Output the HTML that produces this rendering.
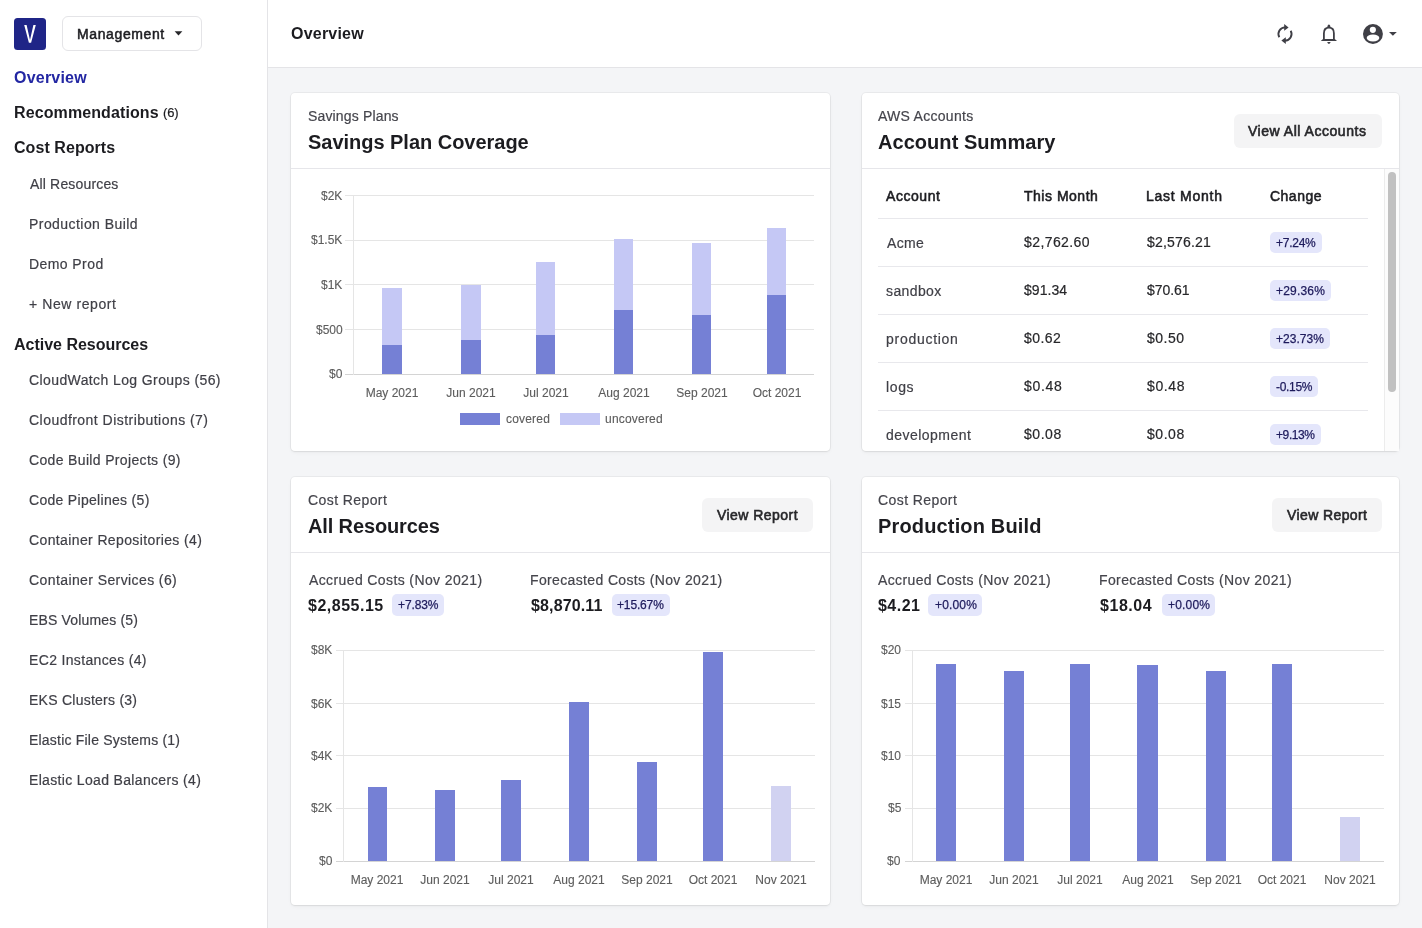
<!DOCTYPE html>
<html><head><meta charset="utf-8"><title>Overview</title>
<style>
html,body{margin:0;padding:0;width:1422px;height:928px;overflow:hidden;background:#f4f5f7;}
body{position:relative;font-family:"Liberation Sans",sans-serif;}
.t{position:absolute;line-height:1;white-space:nowrap;will-change:transform;}
.r{position:absolute;}
</style></head><body>
<div class="r" style="left:0.00px;top:0.00px;width:1422.00px;height:928.00px;background:#f4f5f7;"></div>
<div class="r" style="left:0.00px;top:0.00px;width:267.00px;height:928.00px;background:#ffffff;"></div>
<div class="r" style="left:267.00px;top:0.00px;width:1.00px;height:928.00px;background:#e4e4e7;"></div>
<div class="r" style="left:268.00px;top:0.00px;width:1154.00px;height:67.00px;background:#ffffff;"></div>
<div class="r" style="left:268.00px;top:67.00px;width:1154.00px;height:1.00px;background:#e4e4e7;"></div>
<div class="r" style="left:14.20px;top:18.10px;width:31.60px;height:31.60px;background:#1f2587;border-radius:3.5px;"></div>
<svg class="r" style="left:14px;top:18px" width="32" height="32" viewBox="0 0 32 32"><polygon points="10.2,7.1 12.6,7.1 16.0,21.9 19.4,7.1 21.8,7.1 17.1,24.8 14.9,24.8" fill="#fff"/></svg>
<div class="r" style="left:62.20px;top:16.20px;width:139.50px;height:35.00px;background:#ffffff;box-sizing:border-box;border:1px solid #e4e4e7;border-radius:6px;"></div>
<div class="t" style="left:76.96px;top:27.00px;font-size:14px;color:#1c1c20;-webkit-text-stroke:0.5px #1c1c20;letter-spacing:0.614px;">Management</div>
<svg class="r" style="left:173.5px;top:31px" width="9" height="5" viewBox="0 0 9 5"><polygon points="0.6,0.3 8.4,0.3 4.5,4.5" fill="#27272a"/></svg>
<div class="t" style="left:14.30px;top:70.00px;font-size:16px;color:#2327a3;font-weight:700;letter-spacing:0.213px;">Overview</div>
<div class="t" style="left:13.80px;top:105.00px;font-size:16px;color:#1c1c20;font-weight:700;letter-spacing:0.108px;">Recommendations</div>
<div class="t" style="left:163.29px;top:106.00px;font-size:13px;color:#1c1c20;-webkit-text-stroke:0.2px #1c1c20;letter-spacing:-0.103px;">(6)</div>
<div class="t" style="left:14.30px;top:140.00px;font-size:16px;color:#1c1c20;font-weight:700;letter-spacing:0.063px;">Cost Reports</div>
<div class="t" style="left:29.70px;top:177.00px;font-size:14px;color:#3f3f46;-webkit-text-stroke:0.2px #3f3f46;letter-spacing:0.164px;">All Resources</div>
<div class="t" style="left:28.61px;top:217.00px;font-size:14px;color:#3f3f46;-webkit-text-stroke:0.2px #3f3f46;letter-spacing:0.442px;">Production Build</div>
<div class="t" style="left:28.61px;top:257.00px;font-size:14px;color:#3f3f46;-webkit-text-stroke:0.2px #3f3f46;letter-spacing:0.422px;">Demo Prod</div>
<div class="t" style="left:29.04px;top:297.00px;font-size:14px;color:#3f3f46;-webkit-text-stroke:0.2px #3f3f46;letter-spacing:0.579px;">+ New report</div>
<div class="t" style="left:14.15px;top:337.00px;font-size:16px;color:#1c1c20;font-weight:700;letter-spacing:-0.013px;">Active Resources</div>
<div class="t" style="left:29.04px;top:373.00px;font-size:14px;color:#3f3f46;-webkit-text-stroke:0.2px #3f3f46;letter-spacing:0.396px;">CloudWatch Log Groups (56)</div>
<div class="t" style="left:29.04px;top:413.00px;font-size:14px;color:#3f3f46;-webkit-text-stroke:0.2px #3f3f46;letter-spacing:0.462px;">Cloudfront Distributions (7)</div>
<div class="t" style="left:29.04px;top:453.00px;font-size:14px;color:#3f3f46;-webkit-text-stroke:0.2px #3f3f46;letter-spacing:0.342px;">Code Build Projects (9)</div>
<div class="t" style="left:29.04px;top:493.00px;font-size:14px;color:#3f3f46;-webkit-text-stroke:0.2px #3f3f46;letter-spacing:0.301px;">Code Pipelines (5)</div>
<div class="t" style="left:29.04px;top:533.00px;font-size:14px;color:#3f3f46;-webkit-text-stroke:0.2px #3f3f46;letter-spacing:0.379px;">Container Repositories (4)</div>
<div class="t" style="left:29.04px;top:573.00px;font-size:14px;color:#3f3f46;-webkit-text-stroke:0.2px #3f3f46;letter-spacing:0.405px;">Container Services (6)</div>
<div class="t" style="left:28.61px;top:613.00px;font-size:14px;color:#3f3f46;-webkit-text-stroke:0.2px #3f3f46;letter-spacing:0.158px;">EBS Volumes (5)</div>
<div class="t" style="left:28.61px;top:653.00px;font-size:14px;color:#3f3f46;-webkit-text-stroke:0.2px #3f3f46;letter-spacing:0.342px;">EC2 Instances (4)</div>
<div class="t" style="left:28.61px;top:693.00px;font-size:14px;color:#3f3f46;-webkit-text-stroke:0.2px #3f3f46;letter-spacing:0.251px;">EKS Clusters (3)</div>
<div class="t" style="left:28.61px;top:733.00px;font-size:14px;color:#3f3f46;-webkit-text-stroke:0.2px #3f3f46;letter-spacing:0.207px;">Elastic File Systems (1)</div>
<div class="t" style="left:28.61px;top:773.00px;font-size:14px;color:#3f3f46;-webkit-text-stroke:0.2px #3f3f46;letter-spacing:0.336px;">Elastic Load Balancers (4)</div>
<div class="t" style="left:291.30px;top:26.00px;font-size:16px;color:#1c1c20;font-weight:700;letter-spacing:0.213px;">Overview</div>
<svg class="r" style="left:1273px;top:22px" width="24" height="24" viewBox="0 0 24 24">
<path d="M6.3 15.2 A6.6 6.6 0 0 1 12.2 5.4" fill="none" stroke="#3f3f46" stroke-width="1.9"/>
<path d="M17.7 8.8 A6.6 6.6 0 0 1 11.8 18.6" fill="none" stroke="#3f3f46" stroke-width="1.9"/>
<polygon points="11.2,2 15.6,5.4 11.2,8.8" fill="#3f3f46"/>
<polygon points="12.8,15.2 8.4,18.6 12.8,22" fill="#3f3f46"/>
</svg>
<svg class="r" style="left:1314px;top:20px" width="30" height="28" viewBox="0 0 30 28">
<path d="M9.9 19 V13.2 C9.9 9.6 12 7.7 14.9 7.7 C17.8 7.7 19.9 9.6 19.9 13.2 V19" fill="none" stroke="#3f3f46" stroke-width="1.8"/>
<polygon points="9,18.9 20.8,18.9 23,20.9 6.8,20.9" fill="#3f3f46"/>
<path d="M13.1 7.9 Q13.6 4.5 14.9 4.5 Q16.2 4.5 16.7 7.9 Z" fill="#3f3f46"/>
<path d="M13.2 22.1 H16.6 Q16.2 23.9 14.9 23.9 Q13.6 23.9 13.2 22.1 Z" fill="#3f3f46"/>
</svg>
<svg class="r" style="left:1358px;top:18px" width="44" height="30" viewBox="0 0 44 30">
<circle cx="14.95" cy="15.95" r="9.95" fill="#3f3f46"/>
<circle cx="14.85" cy="11.85" r="3.1" fill="#fff"/>
<ellipse cx="15" cy="20" rx="6.3" ry="3.4" fill="#fff"/>
<polygon points="31,13.9 38.8,13.9 34.9,17.8" fill="#3f3f46"/>
</svg>
<div class="r" style="left:291.40px;top:92.60px;width:538.70px;height:358.70px;background:#ffffff;border-radius:4px;box-shadow:0 0 0 1px rgba(0,0,0,0.045),0 1px 2px rgba(0,0,0,0.05),0 2px 4px rgba(0,0,0,0.03);"></div>
<div class="r" style="left:291.40px;top:168.00px;width:538.70px;height:1.00px;background:#e6e6ea;"></div>
<div class="r" style="left:861.60px;top:92.60px;width:537.60px;height:358.70px;background:#ffffff;border-radius:4px;box-shadow:0 0 0 1px rgba(0,0,0,0.045),0 1px 2px rgba(0,0,0,0.05),0 2px 4px rgba(0,0,0,0.03);"></div>
<div class="r" style="left:861.60px;top:168.00px;width:537.60px;height:1.00px;background:#e6e6ea;"></div>
<div class="r" style="left:291.40px;top:476.80px;width:538.70px;height:428.70px;background:#ffffff;border-radius:4px;box-shadow:0 0 0 1px rgba(0,0,0,0.045),0 1px 2px rgba(0,0,0,0.05),0 2px 4px rgba(0,0,0,0.03);"></div>
<div class="r" style="left:291.40px;top:552.20px;width:538.70px;height:1.00px;background:#e6e6ea;"></div>
<div class="r" style="left:861.60px;top:476.80px;width:537.60px;height:428.70px;background:#ffffff;border-radius:4px;box-shadow:0 0 0 1px rgba(0,0,0,0.045),0 1px 2px rgba(0,0,0,0.05),0 2px 4px rgba(0,0,0,0.03);"></div>
<div class="r" style="left:861.60px;top:552.20px;width:537.60px;height:1.00px;background:#e6e6ea;"></div>
<div class="t" style="left:308.46px;top:109.00px;font-size:14px;color:#45454c;-webkit-text-stroke:0.2px #45454c;letter-spacing:0.155px;">Savings Plans</div>
<div class="t" style="left:308.49px;top:132.00px;font-size:20px;color:#1c1c20;font-weight:700;letter-spacing:-0.025px;">Savings Plan Coverage</div>
<div class="r" style="left:345.00px;top:194.90px;width:468.50px;height:1.00px;background:#e5e5e5;"></div>
<div class="t" style="right:1079.80px;top:190.00px;font-size:12px;color:#5c5c5c;-webkit-text-stroke:0.12px #5c5c5c;">$2K</div>
<div class="r" style="left:345.00px;top:239.60px;width:468.50px;height:1.00px;background:#e5e5e5;"></div>
<div class="t" style="right:1079.80px;top:234.00px;font-size:12px;color:#5c5c5c;-webkit-text-stroke:0.12px #5c5c5c;">$1.5K</div>
<div class="r" style="left:345.00px;top:284.10px;width:468.50px;height:1.00px;background:#e5e5e5;"></div>
<div class="t" style="right:1079.80px;top:279.00px;font-size:12px;color:#5c5c5c;-webkit-text-stroke:0.12px #5c5c5c;">$1K</div>
<div class="r" style="left:345.00px;top:328.70px;width:468.50px;height:1.00px;background:#e5e5e5;"></div>
<div class="t" style="right:1079.48px;top:324.00px;font-size:12px;color:#5c5c5c;-webkit-text-stroke:0.12px #5c5c5c;">$500</div>
<div class="r" style="left:345.00px;top:373.50px;width:468.50px;height:1.00px;background:#d4d4d4;"></div>
<div class="t" style="right:1079.48px;top:368.00px;font-size:12px;color:#5c5c5c;-webkit-text-stroke:0.12px #5c5c5c;">$0</div>
<div class="r" style="left:352.50px;top:195.00px;width:1.00px;height:179.50px;background:#e5e5e5;"></div>
<div class="r" style="left:382.20px;top:288.40px;width:20.20px;height:56.60px;background:#c5c8f5;"></div>
<div class="r" style="left:382.20px;top:345.00px;width:20.20px;height:29.00px;background:#7580d5;"></div>
<div class="t" style="left:192.30px;width:400px;text-align:center;top:387.00px;font-size:12px;color:#5c5c5c;-webkit-text-stroke:0.12px #5c5c5c;">May 2021</div>
<div class="r" style="left:461.00px;top:284.60px;width:19.50px;height:55.40px;background:#c5c8f5;"></div>
<div class="r" style="left:461.00px;top:340.00px;width:19.50px;height:34.00px;background:#7580d5;"></div>
<div class="t" style="left:270.75px;width:400px;text-align:center;top:387.00px;font-size:12px;color:#5c5c5c;-webkit-text-stroke:0.12px #5c5c5c;">Jun 2021</div>
<div class="r" style="left:535.80px;top:261.70px;width:19.70px;height:73.00px;background:#c5c8f5;"></div>
<div class="r" style="left:535.80px;top:334.70px;width:19.70px;height:39.30px;background:#7580d5;"></div>
<div class="t" style="left:345.65px;width:400px;text-align:center;top:387.00px;font-size:12px;color:#5c5c5c;-webkit-text-stroke:0.12px #5c5c5c;">Jul 2021</div>
<div class="r" style="left:613.90px;top:239.30px;width:19.40px;height:70.90px;background:#c5c8f5;"></div>
<div class="r" style="left:613.90px;top:310.20px;width:19.40px;height:63.80px;background:#7580d5;"></div>
<div class="t" style="left:423.60px;width:400px;text-align:center;top:387.00px;font-size:12px;color:#5c5c5c;-webkit-text-stroke:0.12px #5c5c5c;">Aug 2021</div>
<div class="r" style="left:691.80px;top:243.30px;width:19.60px;height:71.40px;background:#c5c8f5;"></div>
<div class="r" style="left:691.80px;top:314.70px;width:19.60px;height:59.30px;background:#7580d5;"></div>
<div class="t" style="left:501.60px;width:400px;text-align:center;top:387.00px;font-size:12px;color:#5c5c5c;-webkit-text-stroke:0.12px #5c5c5c;">Sep 2021</div>
<div class="r" style="left:767.00px;top:228.00px;width:19.40px;height:67.00px;background:#c5c8f5;"></div>
<div class="r" style="left:767.00px;top:295.00px;width:19.40px;height:79.00px;background:#7580d5;"></div>
<div class="t" style="left:576.70px;width:400px;text-align:center;top:387.00px;font-size:12px;color:#5c5c5c;-webkit-text-stroke:0.12px #5c5c5c;">Oct 2021</div>
<div class="r" style="left:460.00px;top:413.20px;width:40.30px;height:11.60px;background:#7580d5;"></div>
<div class="t" style="left:505.76px;top:413.00px;font-size:12px;color:#5c5c5c;-webkit-text-stroke:0.12px #5c5c5c;letter-spacing:0.185px;">covered</div>
<div class="r" style="left:559.80px;top:413.20px;width:40.20px;height:11.60px;background:#c5c8f5;"></div>
<div class="t" style="left:605.01px;top:413.00px;font-size:12px;color:#5c5c5c;-webkit-text-stroke:0.12px #5c5c5c;letter-spacing:0.202px;">uncovered</div>
<div class="t" style="left:878.20px;top:109.00px;font-size:14px;color:#45454c;-webkit-text-stroke:0.2px #45454c;letter-spacing:0.281px;">AWS Accounts</div>
<div class="t" style="left:877.79px;top:132.00px;font-size:20px;color:#1c1c20;font-weight:700;letter-spacing:0.048px;">Account Summary</div>
<div class="r" style="left:1233.70px;top:114.20px;width:148.50px;height:33.70px;background:#f4f4f5;border-radius:6px;"></div>
<div class="t" style="left:1248.30px;top:124.00px;font-size:14px;color:#27272a;-webkit-text-stroke:0.6px #27272a;letter-spacing:0.526px;">View All Accounts</div>
<div class="t" style="left:886.48px;top:189.00px;font-size:14px;color:#1c1c20;-webkit-text-stroke:0.55px #1c1c20;letter-spacing:0.553px;">Account</div>
<div class="t" style="left:1024.46px;top:189.00px;font-size:14px;color:#1c1c20;-webkit-text-stroke:0.55px #1c1c20;letter-spacing:0.512px;">This Month</div>
<div class="t" style="left:1145.98px;top:189.00px;font-size:14px;color:#1c1c20;-webkit-text-stroke:0.55px #1c1c20;letter-spacing:0.741px;">Last Month</div>
<div class="t" style="left:1269.82px;top:189.00px;font-size:14px;color:#1c1c20;-webkit-text-stroke:0.55px #1c1c20;letter-spacing:0.487px;">Change</div>
<div class="r" style="left:878.00px;top:218.00px;width:490.00px;height:1.00px;background:#e8e8ec;"></div>
<div class="t" style="left:886.60px;top:236.00px;font-size:14px;color:#3f3f46;-webkit-text-stroke:0.2px #3f3f46;letter-spacing:0.360px;">Acme</div>
<div class="t" style="left:1024.20px;top:235.00px;font-size:14px;color:#27272a;-webkit-text-stroke:0.2px #27272a;letter-spacing:0.408px;">$2,762.60</div>
<div class="t" style="left:1147.20px;top:235.00px;font-size:14px;color:#27272a;-webkit-text-stroke:0.2px #27272a;letter-spacing:0.198px;">$2,576.21</div>
<div class="r" style="left:1270.40px;top:232.10px;width:51.80px;height:21.20px;background:#e4e6fb;border-radius:5px;"></div>
<div class="t" style="left:1276.28px;top:237.00px;font-size:12px;color:#1e1b5c;-webkit-text-stroke:0.25px #1e1b5c;letter-spacing:-0.263px;">+7.24%</div>
<div class="r" style="left:878.00px;top:266.00px;width:490.00px;height:1.00px;background:#e8e8ec;"></div>
<div class="t" style="left:886.38px;top:284.00px;font-size:14px;color:#3f3f46;-webkit-text-stroke:0.2px #3f3f46;letter-spacing:0.381px;">sandbox</div>
<div class="t" style="left:1024.20px;top:283.00px;font-size:14px;color:#27272a;-webkit-text-stroke:0.2px #27272a;letter-spacing:0.066px;">$91.34</div>
<div class="t" style="left:1147.20px;top:283.00px;font-size:14px;color:#27272a;-webkit-text-stroke:0.2px #27272a;letter-spacing:-0.071px;">$70.61</div>
<div class="r" style="left:1270.40px;top:280.10px;width:61.10px;height:21.20px;background:#e4e6fb;border-radius:5px;"></div>
<div class="t" style="left:1276.28px;top:285.00px;font-size:12px;color:#1e1b5c;-webkit-text-stroke:0.25px #1e1b5c;letter-spacing:0.185px;">+29.36%</div>
<div class="r" style="left:878.00px;top:314.00px;width:490.00px;height:1.00px;background:#e8e8ec;"></div>
<div class="t" style="left:885.73px;top:332.00px;font-size:14px;color:#3f3f46;-webkit-text-stroke:0.2px #3f3f46;letter-spacing:0.720px;">production</div>
<div class="t" style="left:1024.20px;top:331.00px;font-size:14px;color:#27272a;-webkit-text-stroke:0.2px #27272a;letter-spacing:0.433px;">$0.62</div>
<div class="t" style="left:1147.20px;top:331.00px;font-size:14px;color:#27272a;-webkit-text-stroke:0.2px #27272a;letter-spacing:0.479px;">$0.50</div>
<div class="r" style="left:1270.40px;top:328.10px;width:59.80px;height:21.20px;background:#e4e6fb;border-radius:5px;"></div>
<div class="t" style="left:1276.28px;top:333.00px;font-size:12px;color:#1e1b5c;-webkit-text-stroke:0.25px #1e1b5c;letter-spacing:0.035px;">+23.73%</div>
<div class="r" style="left:878.00px;top:362.00px;width:490.00px;height:1.00px;background:#e8e8ec;"></div>
<div class="t" style="left:885.73px;top:380.00px;font-size:14px;color:#3f3f46;-webkit-text-stroke:0.2px #3f3f46;letter-spacing:0.643px;">logs</div>
<div class="t" style="left:1024.20px;top:379.00px;font-size:14px;color:#27272a;-webkit-text-stroke:0.2px #27272a;letter-spacing:0.658px;">$0.48</div>
<div class="t" style="left:1147.20px;top:379.00px;font-size:14px;color:#27272a;-webkit-text-stroke:0.2px #27272a;letter-spacing:0.608px;">$0.48</div>
<div class="r" style="left:1270.40px;top:376.10px;width:47.60px;height:21.20px;background:#e4e6fb;border-radius:5px;"></div>
<div class="t" style="left:1276.33px;top:381.00px;font-size:12px;color:#1e1b5c;-webkit-text-stroke:0.25px #1e1b5c;letter-spacing:-0.310px;">-0.15%</div>
<div class="r" style="left:878.00px;top:410.00px;width:490.00px;height:1.00px;background:#e8e8ec;"></div>
<div class="t" style="left:886.16px;top:428.00px;font-size:14px;color:#3f3f46;-webkit-text-stroke:0.2px #3f3f46;letter-spacing:0.472px;">development</div>
<div class="t" style="left:1024.20px;top:427.00px;font-size:14px;color:#27272a;-webkit-text-stroke:0.2px #27272a;letter-spacing:0.533px;">$0.08</div>
<div class="t" style="left:1147.20px;top:427.00px;font-size:14px;color:#27272a;-webkit-text-stroke:0.2px #27272a;letter-spacing:0.533px;">$0.08</div>
<div class="r" style="left:1270.40px;top:424.10px;width:51.00px;height:21.20px;background:#e4e6fb;border-radius:5px;"></div>
<div class="t" style="left:1276.28px;top:429.00px;font-size:12px;color:#1e1b5c;-webkit-text-stroke:0.25px #1e1b5c;letter-spacing:-0.403px;">+9.13%</div>
<div class="r" style="left:1385.00px;top:169.00px;width:13.50px;height:282.00px;background:#fcfcfc;"></div>
<div class="r" style="left:1384.00px;top:169.00px;width:1.00px;height:282.00px;background:#ececec;"></div>
<div class="r" style="left:1388.30px;top:172.00px;width:7.70px;height:219.50px;background:#c1c1c1;border-radius:4px;"></div>
<div class="t" style="left:307.84px;top:493.00px;font-size:14px;color:#45454c;-webkit-text-stroke:0.2px #45454c;letter-spacing:0.411px;">Cost Report</div>
<div class="t" style="left:308.09px;top:516.00px;font-size:20px;color:#1c1c20;font-weight:700;letter-spacing:-0.130px;">All Resources</div>
<div class="r" style="left:702.30px;top:497.90px;width:110.80px;height:33.70px;background:#f4f4f5;border-radius:6px;"></div>
<div class="t" style="left:717.40px;top:508.00px;font-size:14px;color:#27272a;-webkit-text-stroke:0.6px #27272a;letter-spacing:0.455px;">View Report</div>
<div class="t" style="left:308.50px;top:573.00px;font-size:14px;color:#45454c;-webkit-text-stroke:0.2px #45454c;letter-spacing:0.389px;">Accrued Costs (Nov 2021)</div>
<div class="t" style="left:308.40px;top:598.00px;font-size:16px;color:#1c1c20;font-weight:700;letter-spacing:0.502px;">$2,855.15</div>
<div class="r" style="left:392.30px;top:594.30px;width:52.10px;height:21.70px;background:#e4e6fb;border-radius:5px;"></div>
<div class="t" style="left:397.97px;top:599.00px;font-size:12px;color:#1e1b5c;-webkit-text-stroke:0.25px #1e1b5c;letter-spacing:-0.103px;">+7.83%</div>
<div class="t" style="left:529.51px;top:573.00px;font-size:14px;color:#45454c;-webkit-text-stroke:0.2px #45454c;letter-spacing:0.360px;">Forecasted Costs (Nov 2021)</div>
<div class="t" style="left:530.50px;top:598.00px;font-size:16px;color:#1c1c20;font-weight:700;letter-spacing:0.138px;">$8,870.11</div>
<div class="r" style="left:611.60px;top:594.40px;width:58.50px;height:21.40px;background:#e4e6fb;border-radius:5px;"></div>
<div class="t" style="left:617.08px;top:599.00px;font-size:12px;color:#1e1b5c;-webkit-text-stroke:0.25px #1e1b5c;letter-spacing:-0.148px;">+15.67%</div>
<div class="r" style="left:336.40px;top:649.70px;width:478.30px;height:1.00px;background:#e5e5e5;"></div>
<div class="t" style="right:1089.90px;top:644.00px;font-size:12px;color:#5c5c5c;-webkit-text-stroke:0.12px #5c5c5c;">$8K</div>
<div class="r" style="left:336.40px;top:702.70px;width:478.30px;height:1.00px;background:#e5e5e5;"></div>
<div class="t" style="right:1089.90px;top:698.00px;font-size:12px;color:#5c5c5c;-webkit-text-stroke:0.12px #5c5c5c;">$6K</div>
<div class="r" style="left:336.40px;top:755.00px;width:478.30px;height:1.00px;background:#e5e5e5;"></div>
<div class="t" style="right:1089.90px;top:750.00px;font-size:12px;color:#5c5c5c;-webkit-text-stroke:0.12px #5c5c5c;">$4K</div>
<div class="r" style="left:336.40px;top:807.70px;width:478.30px;height:1.00px;background:#e5e5e5;"></div>
<div class="t" style="right:1089.90px;top:802.00px;font-size:12px;color:#5c5c5c;-webkit-text-stroke:0.12px #5c5c5c;">$2K</div>
<div class="r" style="left:336.40px;top:860.60px;width:478.30px;height:1.00px;background:#d4d4d4;"></div>
<div class="t" style="right:1089.58px;top:855.00px;font-size:12px;color:#5c5c5c;-webkit-text-stroke:0.12px #5c5c5c;">$0</div>
<div class="r" style="left:343.00px;top:650.00px;width:1.00px;height:211.50px;background:#e5e5e5;"></div>
<div class="r" style="left:367.50px;top:786.70px;width:19.50px;height:74.30px;background:#7580d5;"></div>
<div class="t" style="left:177.25px;width:400px;text-align:center;top:874.00px;font-size:12px;color:#5c5c5c;-webkit-text-stroke:0.12px #5c5c5c;">May 2021</div>
<div class="r" style="left:435.20px;top:790.20px;width:19.90px;height:70.80px;background:#7580d5;"></div>
<div class="t" style="left:245.15px;width:400px;text-align:center;top:874.00px;font-size:12px;color:#5c5c5c;-webkit-text-stroke:0.12px #5c5c5c;">Jun 2021</div>
<div class="r" style="left:501.00px;top:779.60px;width:20.00px;height:81.40px;background:#7580d5;"></div>
<div class="t" style="left:311.00px;width:400px;text-align:center;top:874.00px;font-size:12px;color:#5c5c5c;-webkit-text-stroke:0.12px #5c5c5c;">Jul 2021</div>
<div class="r" style="left:568.90px;top:702.00px;width:20.20px;height:159.00px;background:#7580d5;"></div>
<div class="t" style="left:379.00px;width:400px;text-align:center;top:874.00px;font-size:12px;color:#5c5c5c;-webkit-text-stroke:0.12px #5c5c5c;">Aug 2021</div>
<div class="r" style="left:637.00px;top:762.30px;width:20.00px;height:98.70px;background:#7580d5;"></div>
<div class="t" style="left:447.00px;width:400px;text-align:center;top:874.00px;font-size:12px;color:#5c5c5c;-webkit-text-stroke:0.12px #5c5c5c;">Sep 2021</div>
<div class="r" style="left:702.50px;top:651.80px;width:20.00px;height:209.20px;background:#7580d5;"></div>
<div class="t" style="left:512.50px;width:400px;text-align:center;top:874.00px;font-size:12px;color:#5c5c5c;-webkit-text-stroke:0.12px #5c5c5c;">Oct 2021</div>
<div class="r" style="left:770.60px;top:786.10px;width:20.00px;height:74.90px;background:#d1d2f1;"></div>
<div class="t" style="left:580.60px;width:400px;text-align:center;top:874.00px;font-size:12px;color:#5c5c5c;-webkit-text-stroke:0.12px #5c5c5c;">Nov 2021</div>
<div class="t" style="left:877.64px;top:493.00px;font-size:14px;color:#45454c;-webkit-text-stroke:0.2px #45454c;letter-spacing:0.411px;">Cost Report</div>
<div class="t" style="left:877.75px;top:516.00px;font-size:20px;color:#1c1c20;font-weight:700;letter-spacing:0.156px;">Production Build</div>
<div class="r" style="left:1271.60px;top:498.00px;width:110.30px;height:33.70px;background:#f4f4f5;border-radius:6px;"></div>
<div class="t" style="left:1287.10px;top:508.00px;font-size:14px;color:#27272a;-webkit-text-stroke:0.6px #27272a;letter-spacing:0.395px;">View Report</div>
<div class="t" style="left:878.10px;top:573.00px;font-size:14px;color:#45454c;-webkit-text-stroke:0.2px #45454c;letter-spacing:0.372px;">Accrued Costs (Nov 2021)</div>
<div class="t" style="left:878.00px;top:598.00px;font-size:16px;color:#1c1c20;font-weight:700;letter-spacing:0.465px;">$4.21</div>
<div class="r" style="left:928.30px;top:594.40px;width:53.40px;height:21.30px;background:#e4e6fb;border-radius:5px;"></div>
<div class="t" style="left:934.88px;top:599.00px;font-size:12px;color:#1e1b5c;-webkit-text-stroke:0.25px #1e1b5c;letter-spacing:0.157px;">+0.00%</div>
<div class="t" style="left:1099.11px;top:573.00px;font-size:14px;color:#45454c;-webkit-text-stroke:0.2px #45454c;letter-spacing:0.376px;">Forecasted Costs (Nov 2021)</div>
<div class="t" style="left:1100.10px;top:598.00px;font-size:16px;color:#1c1c20;font-weight:700;letter-spacing:0.552px;">$18.04</div>
<div class="r" style="left:1161.50px;top:594.40px;width:53.80px;height:21.30px;background:#e4e6fb;border-radius:5px;"></div>
<div class="t" style="left:1167.78px;top:599.00px;font-size:12px;color:#1e1b5c;-webkit-text-stroke:0.25px #1e1b5c;letter-spacing:0.197px;">+0.00%</div>
<div class="r" style="left:904.80px;top:649.70px;width:479.00px;height:1.00px;background:#e5e5e5;"></div>
<div class="t" style="right:521.18px;top:644.00px;font-size:12px;color:#5c5c5c;-webkit-text-stroke:0.12px #5c5c5c;">$20</div>
<div class="r" style="left:904.80px;top:702.70px;width:479.00px;height:1.00px;background:#e5e5e5;"></div>
<div class="t" style="right:521.13px;top:698.00px;font-size:12px;color:#5c5c5c;-webkit-text-stroke:0.12px #5c5c5c;">$15</div>
<div class="r" style="left:904.80px;top:755.00px;width:479.00px;height:1.00px;background:#e5e5e5;"></div>
<div class="t" style="right:521.18px;top:750.00px;font-size:12px;color:#5c5c5c;-webkit-text-stroke:0.12px #5c5c5c;">$10</div>
<div class="r" style="left:904.80px;top:807.70px;width:479.00px;height:1.00px;background:#e5e5e5;"></div>
<div class="t" style="right:521.13px;top:802.00px;font-size:12px;color:#5c5c5c;-webkit-text-stroke:0.12px #5c5c5c;">$5</div>
<div class="r" style="left:904.80px;top:860.60px;width:479.00px;height:1.00px;background:#d4d4d4;"></div>
<div class="t" style="right:521.18px;top:855.00px;font-size:12px;color:#5c5c5c;-webkit-text-stroke:0.12px #5c5c5c;">$0</div>
<div class="r" style="left:912.30px;top:650.00px;width:1.00px;height:211.50px;background:#e5e5e5;"></div>
<div class="r" style="left:935.90px;top:664.40px;width:20.30px;height:196.60px;background:#7580d5;"></div>
<div class="t" style="left:746.05px;width:400px;text-align:center;top:874.00px;font-size:12px;color:#5c5c5c;-webkit-text-stroke:0.12px #5c5c5c;">May 2021</div>
<div class="r" style="left:1003.70px;top:670.80px;width:20.20px;height:190.20px;background:#7580d5;"></div>
<div class="t" style="left:813.80px;width:400px;text-align:center;top:874.00px;font-size:12px;color:#5c5c5c;-webkit-text-stroke:0.12px #5c5c5c;">Jun 2021</div>
<div class="r" style="left:1069.50px;top:664.00px;width:20.20px;height:197.00px;background:#7580d5;"></div>
<div class="t" style="left:879.60px;width:400px;text-align:center;top:874.00px;font-size:12px;color:#5c5c5c;-webkit-text-stroke:0.12px #5c5c5c;">Jul 2021</div>
<div class="r" style="left:1137.40px;top:664.70px;width:20.60px;height:196.30px;background:#7580d5;"></div>
<div class="t" style="left:947.70px;width:400px;text-align:center;top:874.00px;font-size:12px;color:#5c5c5c;-webkit-text-stroke:0.12px #5c5c5c;">Aug 2021</div>
<div class="r" style="left:1206.20px;top:670.80px;width:19.60px;height:190.20px;background:#7580d5;"></div>
<div class="t" style="left:1016.00px;width:400px;text-align:center;top:874.00px;font-size:12px;color:#5c5c5c;-webkit-text-stroke:0.12px #5c5c5c;">Sep 2021</div>
<div class="r" style="left:1271.70px;top:664.00px;width:19.90px;height:197.00px;background:#7580d5;"></div>
<div class="t" style="left:1081.65px;width:400px;text-align:center;top:874.00px;font-size:12px;color:#5c5c5c;-webkit-text-stroke:0.12px #5c5c5c;">Oct 2021</div>
<div class="r" style="left:1339.80px;top:817.00px;width:19.90px;height:44.00px;background:#d1d2f1;"></div>
<div class="t" style="left:1149.75px;width:400px;text-align:center;top:874.00px;font-size:12px;color:#5c5c5c;-webkit-text-stroke:0.12px #5c5c5c;">Nov 2021</div>
</body></html>
